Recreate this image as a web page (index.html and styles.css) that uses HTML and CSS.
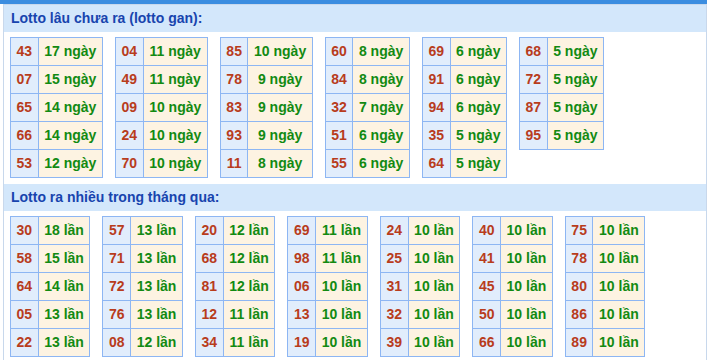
FILE: index.html
```html
<!DOCTYPE html>
<html lang="vi">
<head>
<meta charset="utf-8">
<title>Lotto</title>
<link rel="stylesheet" href="styles.css">
</head>
<body>
<div class="topbar"></div>
<div class="box">
  <div class="section-title">Lotto lâu chưa ra (lotto gan):</div>
  <div class="tables">
    <table class="lt"><tr><td class="n">43</td><td class="v">17 ngày</td></tr><tr><td class="n">07</td><td class="v">15 ngày</td></tr><tr><td class="n">65</td><td class="v">14 ngày</td></tr><tr><td class="n">66</td><td class="v">14 ngày</td></tr><tr><td class="n">53</td><td class="v">12 ngày</td></tr></table>
    <table class="lt"><tr><td class="n">04</td><td class="v">11 ngày</td></tr><tr><td class="n">49</td><td class="v">11 ngày</td></tr><tr><td class="n">09</td><td class="v">10 ngày</td></tr><tr><td class="n">24</td><td class="v">10 ngày</td></tr><tr><td class="n">70</td><td class="v">10 ngày</td></tr></table>
    <table class="lt"><tr><td class="n">85</td><td class="v">10 ngày</td></tr><tr><td class="n">78</td><td class="v">9 ngày</td></tr><tr><td class="n">83</td><td class="v">9 ngày</td></tr><tr><td class="n">93</td><td class="v">9 ngày</td></tr><tr><td class="n">11</td><td class="v">8 ngày</td></tr></table>
    <table class="lt"><tr><td class="n">60</td><td class="v">8 ngày</td></tr><tr><td class="n">84</td><td class="v">8 ngày</td></tr><tr><td class="n">32</td><td class="v">7 ngày</td></tr><tr><td class="n">51</td><td class="v">6 ngày</td></tr><tr><td class="n">55</td><td class="v">6 ngày</td></tr></table>
    <table class="lt"><tr><td class="n">69</td><td class="v">6 ngày</td></tr><tr><td class="n">91</td><td class="v">6 ngày</td></tr><tr><td class="n">94</td><td class="v">6 ngày</td></tr><tr><td class="n">35</td><td class="v">5 ngày</td></tr><tr><td class="n">64</td><td class="v">5 ngày</td></tr></table>
    <table class="lt"><tr><td class="n">68</td><td class="v">5 ngày</td></tr><tr><td class="n">72</td><td class="v">5 ngày</td></tr><tr><td class="n">87</td><td class="v">5 ngày</td></tr><tr><td class="n">95</td><td class="v">5 ngày</td></tr></table>
  </div>
  <div class="section-title">Lotto ra nhiều trong tháng qua:</div>
  <div class="tables">
    <table class="lt"><tr><td class="n">30</td><td class="v">18 lần</td></tr><tr><td class="n">58</td><td class="v">15 lần</td></tr><tr><td class="n">64</td><td class="v">14 lần</td></tr><tr><td class="n">05</td><td class="v">13 lần</td></tr><tr><td class="n">22</td><td class="v">13 lần</td></tr></table>
    <table class="lt"><tr><td class="n">57</td><td class="v">13 lần</td></tr><tr><td class="n">71</td><td class="v">13 lần</td></tr><tr><td class="n">72</td><td class="v">13 lần</td></tr><tr><td class="n">76</td><td class="v">13 lần</td></tr><tr><td class="n">08</td><td class="v">12 lần</td></tr></table>
    <table class="lt"><tr><td class="n">20</td><td class="v">12 lần</td></tr><tr><td class="n">68</td><td class="v">12 lần</td></tr><tr><td class="n">81</td><td class="v">12 lần</td></tr><tr><td class="n">12</td><td class="v">11 lần</td></tr><tr><td class="n">34</td><td class="v">11 lần</td></tr></table>
    <table class="lt"><tr><td class="n">69</td><td class="v">11 lần</td></tr><tr><td class="n">98</td><td class="v">11 lần</td></tr><tr><td class="n">06</td><td class="v">10 lần</td></tr><tr><td class="n">13</td><td class="v">10 lần</td></tr><tr><td class="n">19</td><td class="v">10 lần</td></tr></table>
    <table class="lt"><tr><td class="n">24</td><td class="v">10 lần</td></tr><tr><td class="n">25</td><td class="v">10 lần</td></tr><tr><td class="n">31</td><td class="v">10 lần</td></tr><tr><td class="n">32</td><td class="v">10 lần</td></tr><tr><td class="n">39</td><td class="v">10 lần</td></tr></table>
    <table class="lt"><tr><td class="n">40</td><td class="v">10 lần</td></tr><tr><td class="n">41</td><td class="v">10 lần</td></tr><tr><td class="n">45</td><td class="v">10 lần</td></tr><tr><td class="n">50</td><td class="v">10 lần</td></tr><tr><td class="n">66</td><td class="v">10 lần</td></tr></table>
    <table class="lt"><tr><td class="n">75</td><td class="v">10 lần</td></tr><tr><td class="n">78</td><td class="v">10 lần</td></tr><tr><td class="n">80</td><td class="v">10 lần</td></tr><tr><td class="n">86</td><td class="v">10 lần</td></tr><tr><td class="n">89</td><td class="v">10 lần</td></tr></table>
  </div>
</div>
</body>
</html>
```
FILE: styles.css
```css
html, body {
  margin: 0;
  padding: 0;
  background: #ffffff;
}
body {
  font-family: "Liberation Sans", Arial, sans-serif;
  font-size: 14px;
  font-weight: bold;
  overflow: hidden;
}
.topbar {
  width: 707px;
  height: 4px;
  background: #3b8de0;
}
.box {
  margin-left: 3px;
  width: 702px;
  border-left: 1px solid #c8d8ec;
  border-right: 1px solid #c8d8ec;
  border-top: 1px solid #c8d8ec;
}
.section-title {
  height: 27px;
  line-height: 27px;
  padding: 0 7px;
  background: #d3e7fb;
  color: #1844ae;
  font-size: 14px;
  font-weight: bold;
}
.tables {
  display: flex;
  flex-wrap: wrap;
  align-items: flex-start;
  gap: 12px;
  padding: 5px 6px 6px;
}
.lt {
  border-collapse: collapse;
  border: 1px solid #8db6f3;
}
.lt td {
  border: 1px solid #8db6f3;
  height: 27px;
  line-height: 27px;
  padding: 0 5.55px;
  text-align: center;
  white-space: nowrap;
  box-sizing: border-box;
}
.lt td.n {
  background: #e1edfc;
  color: #b83c1c;
}
.lt td.v {
  background: #fdf3e2;
  color: #128a12;
}
```
